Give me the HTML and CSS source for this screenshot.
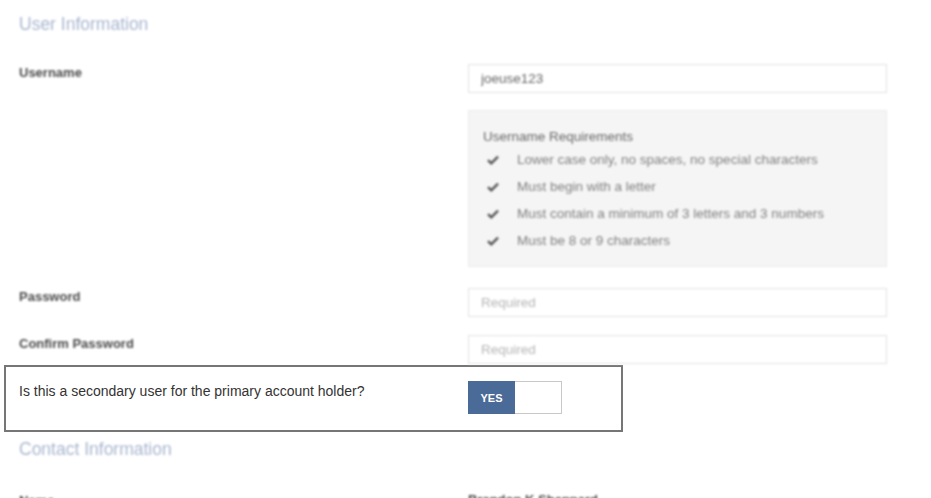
FILE: index.html
```html
<!DOCTYPE html>
<html lang="en">
<head>
    <meta charset="UTF-8">
    <meta name="viewport" content="width=device-width, initial-scale=1.0">
    <title>User Setup</title>
    <link rel="stylesheet" href="styles.css">
</head>
<body>
    <div class="form">
        <div class="faded">
            <h2 class="section-title">User Information</h2>

            <div class="row row-username">
                <label class="label" for="username">Username</label>
                <div class="field">
                    <input type="text" id="username" class="text-input" value="joeuse123">
                    <div class="requirements">
                        <div class="req-title">Username Requirements</div>
                        <ul class="req-list">
                            <li><svg class="check" viewBox="0 0 12 10"><path d="M1 5.2 L4.3 8.3 L11 1.6" fill="none" stroke="currentColor" stroke-width="2.4"/></svg>Lower case only, no spaces, no special characters</li>
                            <li><svg class="check" viewBox="0 0 12 10"><path d="M1 5.2 L4.3 8.3 L11 1.6" fill="none" stroke="currentColor" stroke-width="2.4"/></svg>Must begin with a letter</li>
                            <li><svg class="check" viewBox="0 0 12 10"><path d="M1 5.2 L4.3 8.3 L11 1.6" fill="none" stroke="currentColor" stroke-width="2.4"/></svg>Must contain a minimum of 3 letters and 3 numbers</li>
                            <li><svg class="check" viewBox="0 0 12 10"><path d="M1 5.2 L4.3 8.3 L11 1.6" fill="none" stroke="currentColor" stroke-width="2.4"/></svg>Must be 8 or 9 characters</li>
                        </ul>
                    </div>
                </div>
            </div>

            <div class="row row-password">
                <label class="label" for="password">Password</label>
                <div class="field">
                    <input type="password" id="password" class="text-input" placeholder="Required">
                </div>
            </div>

            <div class="row row-confirm">
                <label class="label" for="confirm">Confirm Password</label>
                <div class="field">
                    <input type="password" id="confirm" class="text-input" placeholder="Required">
                </div>
            </div>
        </div>

        <div class="row highlight">
            <div class="question">Is this a secondary user for the primary account holder?</div>
            <div class="toggle">
                <span class="toggle-on">YES</span>
                <span class="toggle-off"></span>
            </div>
        </div>

        <div class="faded">
            <h2 class="section-title contact-title">Contact Information</h2>
            <div class="row row-name">
                <div class="label">Name</div>
                <div class="value">Brandon K Sheppard</div>
            </div>
        </div>
    </div>
</body>
</html>
```

FILE: styles.css
```css
* { box-sizing: border-box; }

body {
    margin: 0;
    background: #fff;
    font-family: "Liberation Sans", Arial, sans-serif;
    color: #444;
    overflow: hidden;
}

.form {
    padding-left: 19px;
    width: 931px;
}

.faded { filter: blur(1.1px); }

.section-title {
    margin: 0;
    padding-top: 14px;
    font-size: 17.5px;
    line-height: 20px;
    font-weight: normal;
    color: #a9b6cf;
}

.row {
    display: grid;
    grid-template-columns: 449px 419px;
}

.label {
    padding-top: 1px;
    font-size: 13px;
    line-height: 16px;
    font-weight: bold;
    color: #4a4a4a;
}

.row-username { margin-top: 30px; }
.row-password { margin-top: 21px; }
.row-confirm { margin-top: 18px; }

.text-input {
    display: block;
    width: 100%;
    height: 29px;
    padding: 0 12px;
    border: 1px solid #e2e2e2;
    font-family: inherit;
    font-size: 13.5px;
    color: #666;
    outline: none;
}
.text-input::placeholder { color: #b5b5b5; }

.requirements {
    margin-top: 17px;
    height: 157px;
    padding: 17px 14px 12px;
    background: #f5f5f5;
    border: 1px solid #ebebeb;
}

.req-title {
    font-size: 13.5px;
    line-height: 18px;
    color: #666;
}

.req-list {
    margin: 0;
    padding: 0;
    list-style: none;
}

.req-list li {
    display: flex;
    align-items: center;
    padding-left: 4px;
    font-size: 13.5px;
    line-height: 27px;
    color: #808080;
}

.check {
    width: 12px;
    height: 10px;
    margin-right: 18px;
    color: #555;
}

.highlight {
    margin: 1px 0 0 -15px;
    width: 619px;
    padding: 14px 13px 16px;
    border: 2px solid #767676;
    grid-template-columns: 449px 94px;
    background: #fff;
}

.question {
    padding-top: 2px;
    font-size: 14px;
    line-height: 16px;
    color: #333;
}

.toggle {
    display: flex;
    height: 33px;
}

.toggle-on {
    width: 47px;
    display: flex;
    align-items: center;
    justify-content: center;
    background: #4a6a98;
    color: #fff;
    font-size: 11px;
    font-weight: bold;
}

.toggle-off {
    flex: 1;
    border: 1px solid #c8c8c8;
    border-left: none;
}

.contact-title { padding-top: 7px; }

.row-name { margin-top: 33px; }

.value {
    font-size: 13px;
    line-height: 16px;
    font-weight: bold;
    color: #4a4a4a;
}
```
